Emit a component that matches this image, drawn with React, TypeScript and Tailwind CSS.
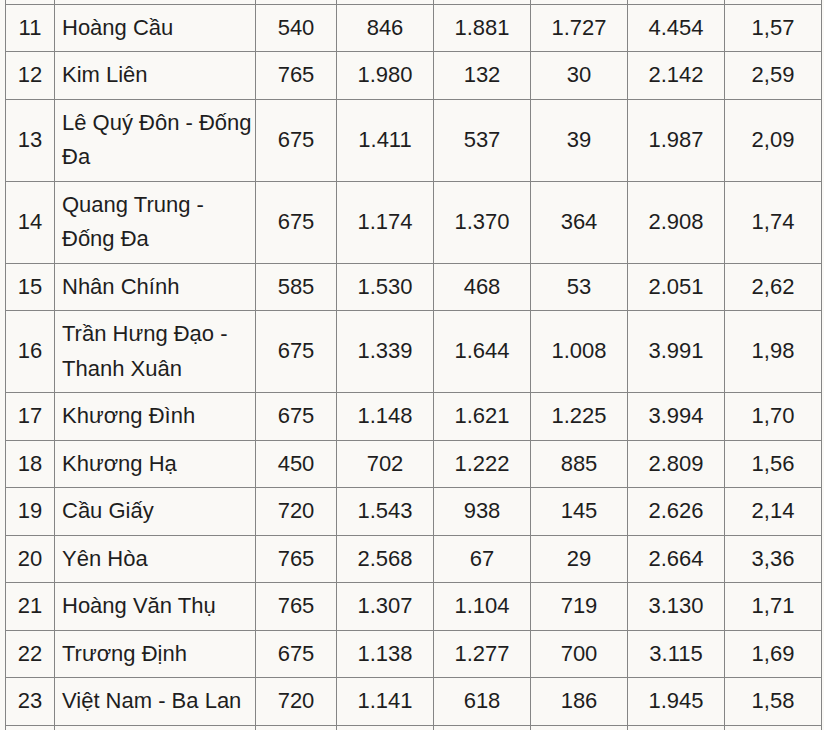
const rows: [string, string, string, string, string, string, string, string][] = [
  ["11", "Hoàng Cầu", "540", "846", "1.881", "1.727", "4.454", "1,57"],
  ["12", "Kim Liên", "765", "1.980", "132", "30", "2.142", "2,59"],
  ["13", "Lê Quý Đôn - Đống Đa", "675", "1.411", "537", "39", "1.987", "2,09"],
  ["14", "Quang Trung - Đống Đa", "675", "1.174", "1.370", "364", "2.908", "1,74"],
  ["15", "Nhân Chính", "585", "1.530", "468", "53", "2.051", "2,62"],
  ["16", "Trần Hưng Đạo - Thanh Xuân", "675", "1.339", "1.644", "1.008", "3.991", "1,98"],
  ["17", "Khương Đình", "675", "1.148", "1.621", "1.225", "3.994", "1,70"],
  ["18", "Khương Hạ", "450", "702", "1.222", "885", "2.809", "1,56"],
  ["19", "Cầu Giấy", "720", "1.543", "938", "145", "2.626", "2,14"],
  ["20", "Yên Hòa", "765", "2.568", "67", "29", "2.664", "3,36"],
  ["21", "Hoàng Văn Thụ", "765", "1.307", "1.104", "719", "3.130", "1,71"],
  ["22", "Trương Định", "675", "1.138", "1.277", "700", "3.115", "1,69"],
  ["23", "Việt Nam - Ba Lan", "720", "1.141", "618", "186", "1.945", "1,58"],
];

const cell = "border border-[#858585] py-[6px] align-middle";

export default function App() {
  return (
    <div className="min-h-screen bg-[#faf9f6] pl-[5px] font-['Liberation_Sans',Arial,sans-serif] text-[22px] leading-[34.5px] text-[#1e1e1e]">
      <table className="w-[816px] table-fixed border-collapse">
        <colgroup>
          <col className="w-[49px]" />
          <col className="w-[201px]" />
          <col className="w-[81px]" />
          <col className="w-[97px]" />
          <col className="w-[97px]" />
          <col className="w-[97px]" />
          <col className="w-[97px]" />
          <col className="w-[97px]" />
        </colgroup>
        <tbody>
          {/* tail of the previous row, scrolled out of view */}
          <tr className="h-[4px]">
            {Array.from({ length: 8 }).map((_, i) => (
              <td key={i} className="border-x border-b border-t-0 border-[#858585] p-0 leading-none" />
            ))}
          </tr>
          {rows.map((r) => (
            <tr key={r[0]}>
              <td className={`${cell} px-[4px] text-center`}>{r[0]}</td>
              <td className={`${cell} pl-[7px] pr-[1px] text-left`}>{r[1]}</td>
              {r.slice(2).map((v, i) => (
                <td key={i} className={`${cell} px-[4px] text-center`}>{v}</td>
              ))}
            </tr>
          ))}
          <tr>
            {Array.from({ length: 8 }).map((_, i) => (
              <td key={i} className={cell}>&nbsp;</td>
            ))}
          </tr>
        </tbody>
      </table>
    </div>
  );
}
